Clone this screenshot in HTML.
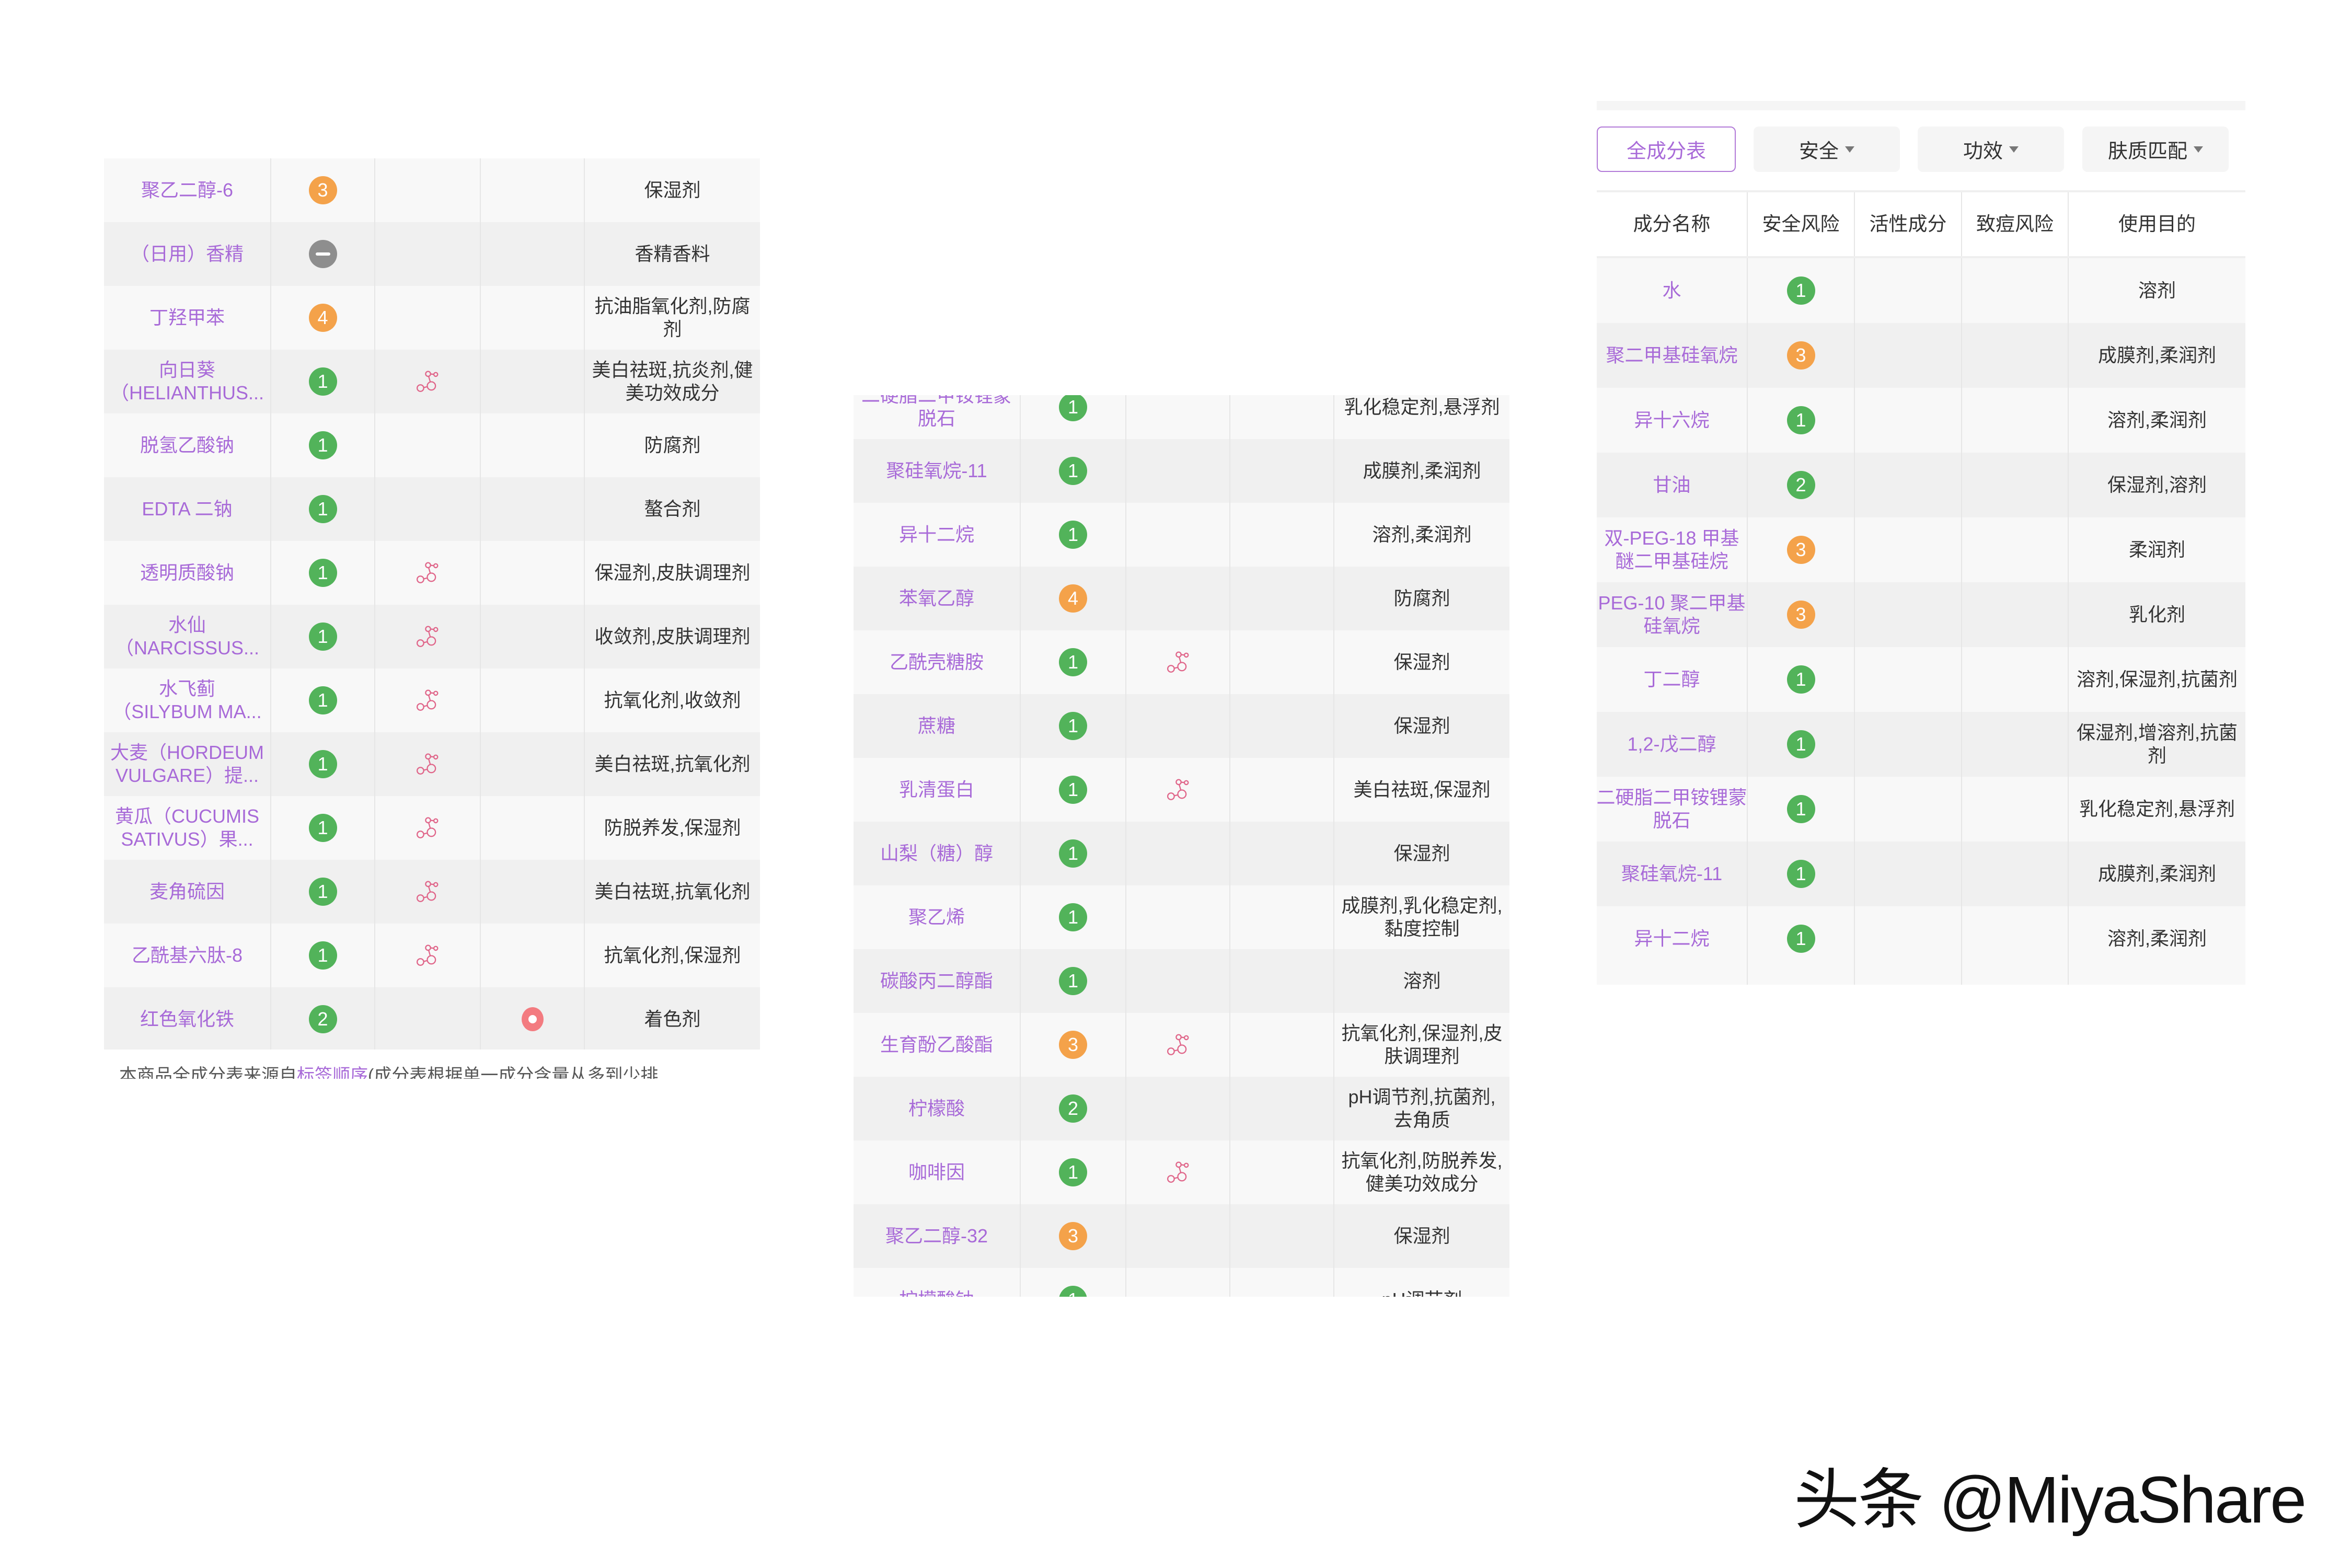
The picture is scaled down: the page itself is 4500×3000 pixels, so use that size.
<!DOCTYPE html>
<html><head><meta charset="utf-8"><style>
*{margin:0;padding:0;box-sizing:border-box}
body{width:4500px;height:3000px;background:#fff;position:relative;overflow:hidden;font-family:"Liberation Sans","Noto Sans CJK SC",sans-serif}
.panel{position:absolute;overflow:hidden}
.row{display:flex;align-items:center;position:relative}
.row.a{background:#f8f8f8}.row.b{background:#f0f0f0}
.c{height:100%;display:flex;align-items:center;justify-content:center;text-align:center;border-right:2px solid #e6e6e6;font-size:36px;line-height:44px}
.c:last-child{border-right:none}
.n{color:#a86ad8}
.p{color:#333}
.bd{width:54px;height:54px;border-radius:50%;color:#fff;font-size:36px;display:flex;align-items:center;justify-content:center}
.g{background:#52b35a}.o{background:#f4a24a}.gr{background:#8e8e8e}
.rd{width:42px;height:46px;border-radius:50%;background:#f37b80;position:relative}
.rd:after{content:"";position:absolute;left:13px;top:15px;width:16px;height:16px;border-radius:50%;background:#fff}
.btn{position:absolute;top:242px;height:87px;border-radius:10px;background:#f5f5f5;font-size:38px;color:#333;display:flex;align-items:center;justify-content:center}
.tri{display:inline-block;width:0;height:0;border-left:9px solid transparent;border-right:9px solid transparent;border-top:12px solid #777;margin-left:12px}
.hd{color:#333;font-size:37px}
</style></head><body>

<svg width="0" height="0" style="position:absolute"><defs><symbol id="mol" viewBox="0 0 44 44"><g fill="none" stroke="#e0668a" stroke-width="2.2"><circle cx="9" cy="34" r="6"/><circle cx="29" cy="30" r="7.5"/><circle cx="23" cy="8" r="4.5"/><circle cx="37" cy="9" r="3.5"/><path d="M15 33L21.5 31.5M24 12.5L27 22.5M27.5 8.2L33.5 8.8"/></g></symbol></defs></svg>

<!-- LEFT PANEL -->
<div class="panel" style="left:199px;top:303px;width:1255px;height:1705px">
<div class="row a" style="height:122px"><div class="c n" style="width:320px">聚乙二醇-6</div><div class="c" style="width:199px"><div class="bd o">3</div></div><div class="c" style="width:202px"></div><div class="c" style="width:199px"></div><div class="c p" style="width:335px">保湿剂</div></div>
<div class="row b" style="height:122px"><div class="c n" style="width:320px">（日用）香精</div><div class="c" style="width:199px"><div class="bd gr"><div style="width:28px;height:6px;background:#fff;border-radius:3px"></div></div></div><div class="c" style="width:202px"></div><div class="c" style="width:199px"></div><div class="c p" style="width:335px">香精香料</div></div>
<div class="row a" style="height:122px"><div class="c n" style="width:320px">丁羟甲苯</div><div class="c" style="width:199px"><div class="bd o">4</div></div><div class="c" style="width:202px"></div><div class="c" style="width:199px"></div><div class="c p" style="width:335px">抗油脂氧化剂,防腐<br>剂</div></div>
<div class="row b" style="height:122px"><div class="c n" style="width:320px">向日葵<br>（HELIANTHUS...</div><div class="c" style="width:199px"><div class="bd g">1</div></div><div class="c" style="width:202px"><svg width="46" height="46"><use href="#mol"/></svg></div><div class="c" style="width:199px"></div><div class="c p" style="width:335px">美白祛斑,抗炎剂,健<br>美功效成分</div></div>
<div class="row a" style="height:122px"><div class="c n" style="width:320px">脱氢乙酸钠</div><div class="c" style="width:199px"><div class="bd g">1</div></div><div class="c" style="width:202px"></div><div class="c" style="width:199px"></div><div class="c p" style="width:335px">防腐剂</div></div>
<div class="row b" style="height:122px"><div class="c n" style="width:320px">EDTA 二钠</div><div class="c" style="width:199px"><div class="bd g">1</div></div><div class="c" style="width:202px"></div><div class="c" style="width:199px"></div><div class="c p" style="width:335px">螯合剂</div></div>
<div class="row a" style="height:122px"><div class="c n" style="width:320px">透明质酸钠</div><div class="c" style="width:199px"><div class="bd g">1</div></div><div class="c" style="width:202px"><svg width="46" height="46"><use href="#mol"/></svg></div><div class="c" style="width:199px"></div><div class="c p" style="width:335px">保湿剂,皮肤调理剂</div></div>
<div class="row b" style="height:122px"><div class="c n" style="width:320px">水仙<br>（NARCISSUS...</div><div class="c" style="width:199px"><div class="bd g">1</div></div><div class="c" style="width:202px"><svg width="46" height="46"><use href="#mol"/></svg></div><div class="c" style="width:199px"></div><div class="c p" style="width:335px">收敛剂,皮肤调理剂</div></div>
<div class="row a" style="height:122px"><div class="c n" style="width:320px">水飞蓟<br>（SILYBUM MA...</div><div class="c" style="width:199px"><div class="bd g">1</div></div><div class="c" style="width:202px"><svg width="46" height="46"><use href="#mol"/></svg></div><div class="c" style="width:199px"></div><div class="c p" style="width:335px">抗氧化剂,收敛剂</div></div>
<div class="row b" style="height:122px"><div class="c n" style="width:320px">大麦（HORDEUM<br>VULGARE）提...</div><div class="c" style="width:199px"><div class="bd g">1</div></div><div class="c" style="width:202px"><svg width="46" height="46"><use href="#mol"/></svg></div><div class="c" style="width:199px"></div><div class="c p" style="width:335px">美白祛斑,抗氧化剂</div></div>
<div class="row a" style="height:122px"><div class="c n" style="width:320px">黄瓜（CUCUMIS<br>SATIVUS）果...</div><div class="c" style="width:199px"><div class="bd g">1</div></div><div class="c" style="width:202px"><svg width="46" height="46"><use href="#mol"/></svg></div><div class="c" style="width:199px"></div><div class="c p" style="width:335px">防脱养发,保湿剂</div></div>
<div class="row b" style="height:122px"><div class="c n" style="width:320px">麦角硫因</div><div class="c" style="width:199px"><div class="bd g">1</div></div><div class="c" style="width:202px"><svg width="46" height="46"><use href="#mol"/></svg></div><div class="c" style="width:199px"></div><div class="c p" style="width:335px">美白祛斑,抗氧化剂</div></div>
<div class="row a" style="height:122px"><div class="c n" style="width:320px">乙酰基六肽-8</div><div class="c" style="width:199px"><div class="bd g">1</div></div><div class="c" style="width:202px"><svg width="46" height="46"><use href="#mol"/></svg></div><div class="c" style="width:199px"></div><div class="c p" style="width:335px">抗氧化剂,保湿剂</div></div>
<div class="row b" style="height:122px"><div class="c n" style="width:320px">红色氧化铁</div><div class="c" style="width:199px"><div class="bd g">2</div></div><div class="c" style="width:202px"></div><div class="c" style="width:199px"><div class="rd"></div></div><div class="c p" style="width:335px">着色剂</div></div>
</div>
<div style="position:absolute;left:228px;top:2034px;height:30px;overflow:hidden;font-size:34px;line-height:48px;color:#555;white-space:nowrap">本商品全成分表来源自<span style="color:#a86ad8">标签顺序</span>(成分表根据单一成分含量从多到少排</div>

<!-- MIDDLE PANEL -->
<div class="panel" style="left:1633px;top:756px;width:1255px;height:1725px">
<div style="position:absolute;left:0;top:-38px;width:1255px">
<div class="row a" style="height:122px"><div class="c n" style="width:320px">二硬脂二甲铵锂蒙<br>脱石</div><div class="c" style="width:202px"><div class="bd g">1</div></div><div class="c" style="width:199px"></div><div class="c" style="width:199px"></div><div class="c p" style="width:335px">乳化稳定剂,悬浮剂</div></div>
<div class="row b" style="height:122px"><div class="c n" style="width:320px">聚硅氧烷-11</div><div class="c" style="width:202px"><div class="bd g">1</div></div><div class="c" style="width:199px"></div><div class="c" style="width:199px"></div><div class="c p" style="width:335px">成膜剂,柔润剂</div></div>
<div class="row a" style="height:122px"><div class="c n" style="width:320px">异十二烷</div><div class="c" style="width:202px"><div class="bd g">1</div></div><div class="c" style="width:199px"></div><div class="c" style="width:199px"></div><div class="c p" style="width:335px">溶剂,柔润剂</div></div>
<div class="row b" style="height:122px"><div class="c n" style="width:320px">苯氧乙醇</div><div class="c" style="width:202px"><div class="bd o">4</div></div><div class="c" style="width:199px"></div><div class="c" style="width:199px"></div><div class="c p" style="width:335px">防腐剂</div></div>
<div class="row a" style="height:122px"><div class="c n" style="width:320px">乙酰壳糖胺</div><div class="c" style="width:202px"><div class="bd g">1</div></div><div class="c" style="width:199px"><svg width="46" height="46"><use href="#mol"/></svg></div><div class="c" style="width:199px"></div><div class="c p" style="width:335px">保湿剂</div></div>
<div class="row b" style="height:122px"><div class="c n" style="width:320px">蔗糖</div><div class="c" style="width:202px"><div class="bd g">1</div></div><div class="c" style="width:199px"></div><div class="c" style="width:199px"></div><div class="c p" style="width:335px">保湿剂</div></div>
<div class="row a" style="height:122px"><div class="c n" style="width:320px">乳清蛋白</div><div class="c" style="width:202px"><div class="bd g">1</div></div><div class="c" style="width:199px"><svg width="46" height="46"><use href="#mol"/></svg></div><div class="c" style="width:199px"></div><div class="c p" style="width:335px">美白祛斑,保湿剂</div></div>
<div class="row b" style="height:122px"><div class="c n" style="width:320px">山梨（糖）醇</div><div class="c" style="width:202px"><div class="bd g">1</div></div><div class="c" style="width:199px"></div><div class="c" style="width:199px"></div><div class="c p" style="width:335px">保湿剂</div></div>
<div class="row a" style="height:122px"><div class="c n" style="width:320px">聚乙烯</div><div class="c" style="width:202px"><div class="bd g">1</div></div><div class="c" style="width:199px"></div><div class="c" style="width:199px"></div><div class="c p" style="width:335px">成膜剂,乳化稳定剂,<br>黏度控制</div></div>
<div class="row b" style="height:122px"><div class="c n" style="width:320px">碳酸丙二醇酯</div><div class="c" style="width:202px"><div class="bd g">1</div></div><div class="c" style="width:199px"></div><div class="c" style="width:199px"></div><div class="c p" style="width:335px">溶剂</div></div>
<div class="row a" style="height:122px"><div class="c n" style="width:320px">生育酚乙酸酯</div><div class="c" style="width:202px"><div class="bd o">3</div></div><div class="c" style="width:199px"><svg width="46" height="46"><use href="#mol"/></svg></div><div class="c" style="width:199px"></div><div class="c p" style="width:335px">抗氧化剂,保湿剂,皮<br>肤调理剂</div></div>
<div class="row b" style="height:122px"><div class="c n" style="width:320px">柠檬酸</div><div class="c" style="width:202px"><div class="bd g">2</div></div><div class="c" style="width:199px"></div><div class="c" style="width:199px"></div><div class="c p" style="width:335px">pH调节剂,抗菌剂,<br>去角质</div></div>
<div class="row a" style="height:122px"><div class="c n" style="width:320px">咖啡因</div><div class="c" style="width:202px"><div class="bd g">1</div></div><div class="c" style="width:199px"><svg width="46" height="46"><use href="#mol"/></svg></div><div class="c" style="width:199px"></div><div class="c p" style="width:335px">抗氧化剂,防脱养发,<br>健美功效成分</div></div>
<div class="row b" style="height:122px"><div class="c n" style="width:320px">聚乙二醇-32</div><div class="c" style="width:202px"><div class="bd o">3</div></div><div class="c" style="width:199px"></div><div class="c" style="width:199px"></div><div class="c p" style="width:335px">保湿剂</div></div>
<div class="row a" style="height:122px"><div class="c n" style="width:320px">柠檬酸钠</div><div class="c" style="width:202px"><div class="bd g">1</div></div><div class="c" style="width:199px"></div><div class="c" style="width:199px"></div><div class="c p" style="width:335px">pH调节剂</div></div>
</div></div>

<!-- RIGHT PANEL -->
<div class="panel" style="left:3055px;top:193px;width:1241px;height:1700px">
<div style="position:absolute;left:0;top:0;width:1241px;height:18px;background:#f5f5f5"></div>
<div class="btn" style="left:0;top:49px;width:266px;background:#fff;border:2px solid #b27ad8;color:#a86ad8">全成分表</div>
<div class="btn" style="left:300px;top:49px;width:280px">安全<span class="tri"></span></div>
<div class="btn" style="left:614px;top:49px;width:280px">功效<span class="tri"></span></div>
<div class="btn" style="left:929px;top:49px;width:280px">肤质匹配<span class="tri"></span></div>
<div style="position:absolute;left:0;top:171px;width:1241px;height:4px;background:#efefef"></div>
<div style="position:absolute;left:0;top:175px;width:1241px">
<div class="row" style="height:126px;background:#fff;border-bottom:4px solid #efefef"><div class="c hd" style="width:289px">成分名称</div><div class="c hd" style="width:205px">安全风险</div><div class="c hd" style="width:205px">活性成分</div><div class="c hd" style="width:204px">致痘风险</div><div class="c hd" style="width:338px">使用目的</div></div>
<div class="row a" style="height:124px"><div class="c n" style="width:289px">水</div><div class="c" style="width:205px"><div class="bd g">1</div></div><div class="c" style="width:205px"></div><div class="c" style="width:204px"></div><div class="c p" style="width:338px">溶剂</div></div>
<div class="row b" style="height:124px"><div class="c n" style="width:289px;white-space:nowrap">聚二甲基硅氧烷</div><div class="c" style="width:205px"><div class="bd o">3</div></div><div class="c" style="width:205px"></div><div class="c" style="width:204px"></div><div class="c p" style="width:338px">成膜剂,柔润剂</div></div>
<div class="row a" style="height:124px"><div class="c n" style="width:289px">异十六烷</div><div class="c" style="width:205px"><div class="bd g">1</div></div><div class="c" style="width:205px"></div><div class="c" style="width:204px"></div><div class="c p" style="width:338px">溶剂,柔润剂</div></div>
<div class="row b" style="height:124px"><div class="c n" style="width:289px">甘油</div><div class="c" style="width:205px"><div class="bd g">2</div></div><div class="c" style="width:205px"></div><div class="c" style="width:204px"></div><div class="c p" style="width:338px">保湿剂,溶剂</div></div>
<div class="row a" style="height:124px"><div class="c n" style="width:289px;white-space:nowrap">双-PEG-18 甲基<br>醚二甲基硅烷</div><div class="c" style="width:205px"><div class="bd o">3</div></div><div class="c" style="width:205px"></div><div class="c" style="width:204px"></div><div class="c p" style="width:338px">柔润剂</div></div>
<div class="row b" style="height:124px"><div class="c n" style="width:289px;white-space:nowrap">PEG-10 聚二甲基<br>硅氧烷</div><div class="c" style="width:205px"><div class="bd o">3</div></div><div class="c" style="width:205px"></div><div class="c" style="width:204px"></div><div class="c p" style="width:338px">乳化剂</div></div>
<div class="row a" style="height:124px"><div class="c n" style="width:289px">丁二醇</div><div class="c" style="width:205px"><div class="bd g">1</div></div><div class="c" style="width:205px"></div><div class="c" style="width:204px"></div><div class="c p" style="width:338px">溶剂,保湿剂,抗菌剂</div></div>
<div class="row b" style="height:124px"><div class="c n" style="width:289px">1,2-戊二醇</div><div class="c" style="width:205px"><div class="bd g">1</div></div><div class="c" style="width:205px"></div><div class="c" style="width:204px"></div><div class="c p" style="width:338px">保湿剂,增溶剂,抗菌<br>剂</div></div>
<div class="row a" style="height:124px"><div class="c n" style="width:289px;white-space:nowrap">二硬脂二甲铵锂蒙<br>脱石</div><div class="c" style="width:205px"><div class="bd g">1</div></div><div class="c" style="width:205px"></div><div class="c" style="width:204px"></div><div class="c p" style="width:338px">乳化稳定剂,悬浮剂</div></div>
<div class="row b" style="height:124px"><div class="c n" style="width:289px">聚硅氧烷-11</div><div class="c" style="width:205px"><div class="bd g">1</div></div><div class="c" style="width:205px"></div><div class="c" style="width:204px"></div><div class="c p" style="width:338px">成膜剂,柔润剂</div></div>
<div class="row a" style="height:150px"><div class="c n" style="width:289px;padding-bottom:26px">异十二烷</div><div class="c" style="width:205px;padding-bottom:26px"><div class="bd g">1</div></div><div class="c" style="width:205px"></div><div class="c" style="width:204px"></div><div class="c p" style="width:338px;padding-bottom:26px">溶剂,柔润剂</div></div>
</div></div>

<div style="position:absolute;left:3432px;top:2795px;font-size:126px;line-height:150px;color:#111;white-space:nowrap;letter-spacing:-3px">头条 @MiyaShare</div>
</body></html>
